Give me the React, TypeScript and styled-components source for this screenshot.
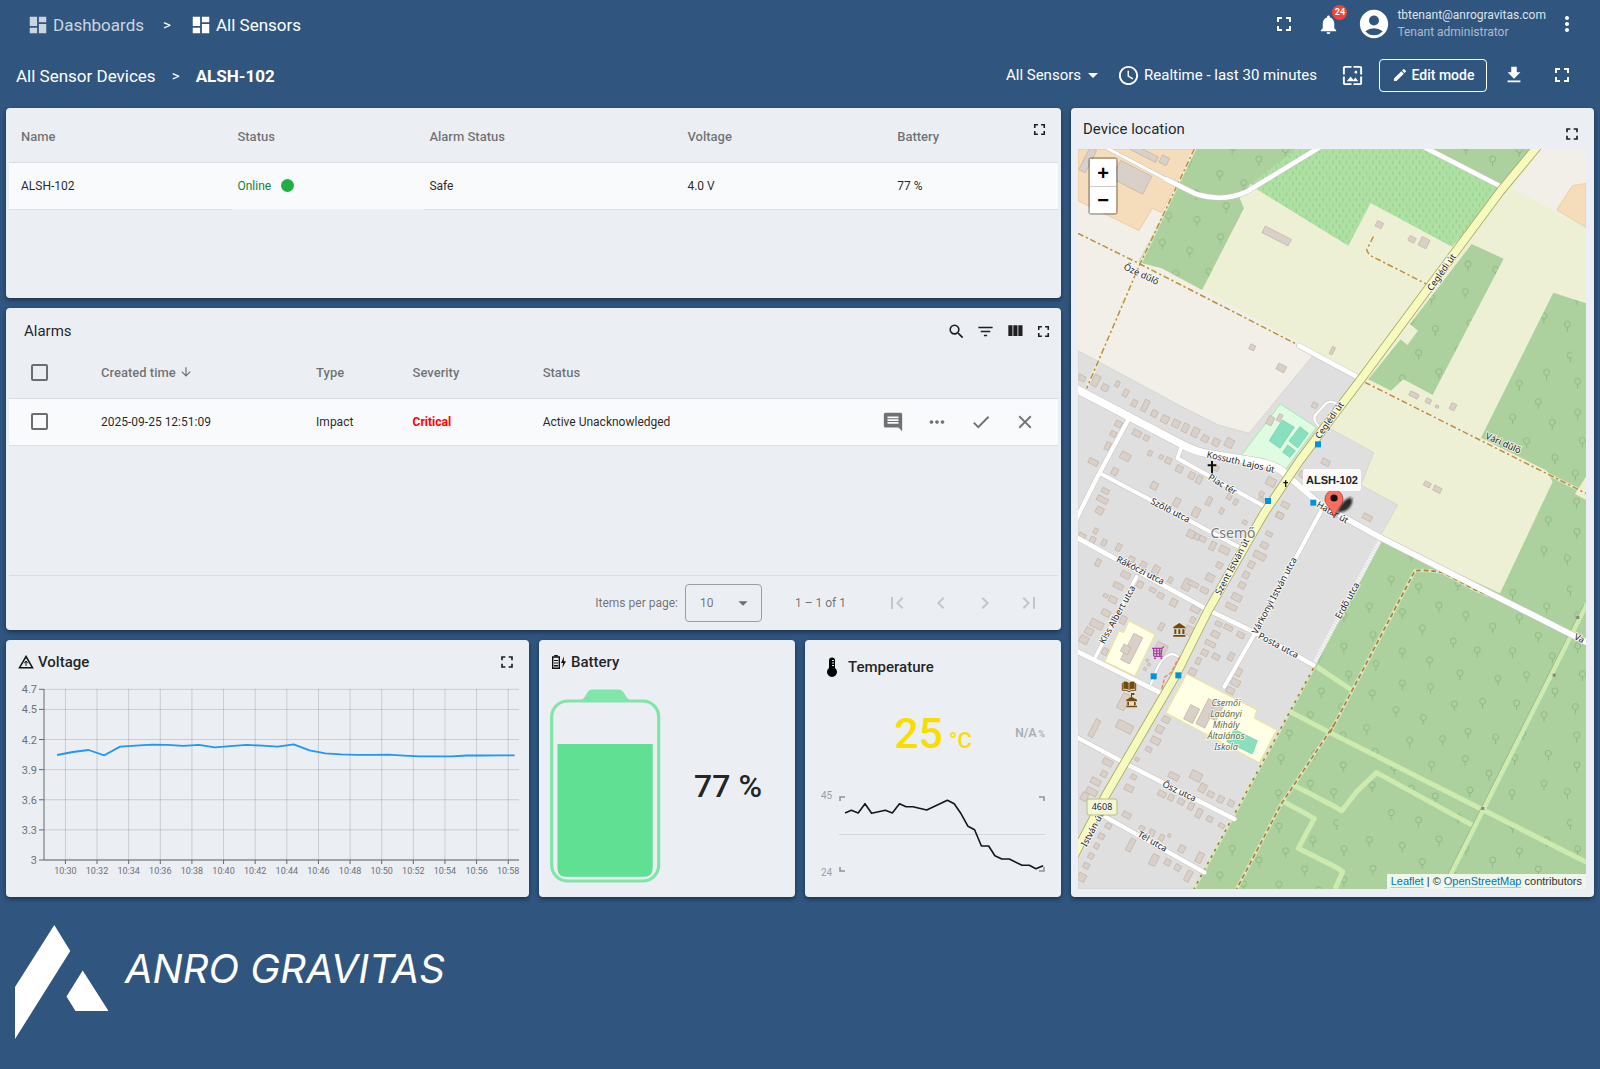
import React from 'react';
import styled, { createGlobalStyle, css } from 'styled-components';
import {
  MdAccountCircle, MdArrowDownward, MdArrowDropDown, MdCheck, MdChevronLeft, MdChevronRight, MdClose,
  MdComment, MdDashboard, MdDownload, MdEdit, MdFilterList, MdFirstPage, MdFullscreen, MdLastPage,
  MdMoreHoriz, MdMoreVert, MdNotifications, MdSchedule, MdSearch, MdWallpaper,
} from 'react-icons/md';

const GlobalStyle = createGlobalStyle`
  *, *::before, *::after { box-sizing: border-box; }
  body {
    margin: 0;
    background: #305680;
    font-family: Roboto, "Liberation Sans", sans-serif;
    color: rgba(0, 0, 0, 0.87);
  }
  button, select { font: inherit; color: inherit; }
`;

const Page = styled.div`
  min-height: 100vh;
  display: flex;
  flex-direction: column;
`;

/* ---------- Toolbars ---------- */

const TopBar = styled.header`
  display: flex;
  align-items: center;
  justify-content: space-between;
  height: 48px;
  padding: 0 12px 0 27px;
  color: #fff;
`;

const Crumbs = styled.nav`
  display: flex;
  align-items: center;
  padding-top: 2px;
  font-size: 17px;
  line-height: 24px;
`;

const CrumbLink = styled.a<{ $dim?: boolean }>`
  display: flex;
  align-items: center;
  gap: 4px;
  color: ${(p) => (p.$dim ? 'rgba(255,255,255,0.75)' : '#fff')};
  text-decoration: none;
`;

const Separator = styled.span<{ $width?: number }>`
  width: ${(p) => p.$width ?? 46}px;
  text-align: center;
  font-size: 15px;
`;

const Row = styled.div<{ $gap?: number; $end?: number }>`
  display: flex;
  align-items: center;
  gap: ${(p) => p.$gap ?? 0}px;
  margin-right: ${(p) => p.$end ?? 0}px;
`;

const IconButton = styled.button<{ $size?: number; $color?: string }>`
  display: inline-flex;
  align-items: center;
  justify-content: center;
  flex: none;
  width: ${(p) => p.$size ?? 44}px;
  height: ${(p) => Math.min(p.$size ?? 44, 40)}px;
  padding: 0;
  border: 0;
  background: none;
  color: ${(p) => p.$color ?? 'inherit'};
  position: relative;
  cursor: pointer;
`;

const LowButton = styled(IconButton)`
  align-self: flex-end;
`;

const Badge = styled.span`
  position: absolute;
  top: 1px;
  right: 3px;
  width: 15px;
  height: 15px;
  border-radius: 50%;
  background: #f44336;
  color: #fff;
  font-size: 9px;
  font-weight: 700;
  line-height: 15px;
  text-align: center;
`;

const User = styled.div`
  display: flex;
  align-items: center;
  gap: 6px;
  padding-left: 7px;
`;

const UserText = styled.div`
  font-size: 12px;
  line-height: 17px;
  color: rgba(255, 255, 255, 0.85);
`;

const UserRole = styled.div`
  color: rgba(255, 255, 255, 0.6);
`;

const SubBar = styled(TopBar)`
  height: 54px;
  padding: 0 12px 0 16px;
`;

const Current = styled.strong`
  font-weight: 700;
`;

const ToolButton = styled.button<{ $gap?: number }>`
  display: inline-flex;
  align-items: center;
  gap: ${(p) => p.$gap ?? 0}px;
  padding: 0;
  border: 0;
  background: none;
  font-size: 15px;
  line-height: 24px;
  cursor: pointer;
`;

const EditButton = styled.button`
  display: inline-flex;
  align-items: center;
  justify-content: center;
  gap: 4px;
  width: 108px;
  height: 33px;
  margin: 0 5px;
  padding: 0;
  border: 1px solid #fff;
  border-radius: 4px;
  background: none;
  font-size: 14px;
  font-weight: 500;
  cursor: pointer;
`;

/* ---------- Dashboard grid ---------- */

const Board = styled.main`
  display: grid;
  grid-template-columns: minmax(0, 1055fr) minmax(0, 523fr);
  gap: 10px;
  padding: 6px;
`;

const LeftColumn = styled.div`
  display: grid;
  grid-template-rows: minmax(190px, auto) minmax(322px, auto) minmax(257px, auto);
  gap: 10px;
`;

const SmallCards = styled.div`
  display: grid;
  grid-template-columns: minmax(0, 523fr) minmax(0, 256fr) minmax(0, 256fr);
  gap: 10px;
`;

const Card = styled.section`
  position: relative;
  display: flex;
  flex-direction: column;
  border-radius: 4px;
  background: #ebeef3;
  box-shadow: 0 2px 5px rgba(0, 0, 0, 0.45);
`;

const TableCard = styled(Card)`
  padding: 0 3px;
`;

const CornerButton = styled(IconButton)`
  position: absolute;
  top: 6px;
  right: 7px;
`;

const TitleRow = styled.div<{ $height?: number; $left?: number; $right?: number }>`
  display: flex;
  align-items: center;
  justify-content: space-between;
  height: ${(p) => p.$height ?? 44}px;
  padding: 0 ${(p) => p.$right ?? 7}px 0 ${(p) => p.$left ?? 12}px;
`;

const Title = styled.h2<{ $medium?: boolean; $gap?: number }>`
  display: flex;
  align-items: center;
  gap: ${(p) => p.$gap ?? 4}px;
  margin: 0;
  font-size: 15px;
  line-height: 20px;
  font-weight: ${(p) => (p.$medium ? 500 : 400)};
`;

/* ---------- Tables ---------- */

const Table = styled.table<{ $compact?: boolean }>`
  width: 100%;
  table-layout: fixed;
  border-collapse: collapse;
  th {
    height: ${(p) => (p.$compact ? 44 : 54)}px;
    padding-top: ${(p) => (p.$compact ? 0 : 4)}px;
    padding-bottom: ${(p) => (p.$compact ? 7 : 0)}px;
  }
`;

const Th = styled.th<{ $left?: number }>`
  padding: 0 0 0 ${(p) => p.$left ?? 5}px;
  border-bottom: 1px solid #d9dce0;
  text-align: left;
  font-size: 13px;
  font-weight: 500;
  color: rgba(0, 0, 0, 0.54);
`;

const cellBorder = css`
  border-bottom: 1px solid #dcdfe3;
`;

const Td = styled.td<{ $left?: number; $plain?: boolean }>`
  height: 47px;
  padding: 0 0 0 ${(p) => p.$left ?? 5}px;
  background: #f8fafc;
  font-size: 12px;
  ${(p) => !p.$plain && cellBorder}
`;

const Online = styled.span`
  display: inline-flex;
  align-items: center;
  gap: 10px;
  color: #198038;
`;

const Dot = styled.span`
  width: 13px;
  height: 13px;
  border-radius: 50%;
  background: #20b041;
`;

const Critical = styled.span`
  color: #f00;
  font-weight: 700;
`;

const Checkbox = styled.input`
  appearance: none;
  display: block;
  width: 17px;
  height: 17px;
  margin: 0;
  border: 2px solid #6b6d70;
  border-radius: 2px;
`;

const Sorted = styled.span`
  display: inline-flex;
  align-items: center;
  gap: 3px;
`;

const Actions = styled.div`
  display: flex;
  justify-content: flex-end;
  padding-right: 11px;
  color: #6f7173;
`;

const Paginator = styled.footer`
  display: flex;
  align-items: center;
  justify-content: flex-end;
  height: 55px;
  margin-top: auto;
  padding-right: 7px;
  border-top: 1px solid #d9dce0;
  font-size: 12px;
  color: rgba(0, 0, 0, 0.54);
`;

const SelectBox = styled.div`
  position: relative;
  margin: 0 33px 0 7px;
  svg { position: absolute; right: 8px; top: 8px; pointer-events: none; }
`;

const Select = styled.select`
  appearance: none;
  display: block;
  width: 77px;
  height: 38px;
  padding: 0 14px;
  border: 1px solid #9c9ea2;
  border-radius: 4px;
  background: none;
`;

const Range = styled.span`
  margin-right: 29px;
`;

/* ---------- Small widgets ---------- */

const Drawing = styled.svg`
  display: block;
  width: 100%;
`;

const BatteryBody = styled.div`
  display: flex;
  align-items: center;
  padding: 4px 0 0 11px;
`;

const BatteryValue = styled.div`
  flex: 1;
  text-align: center;
  font-size: 32px;
  font-weight: 500;
`;

const TempRow = styled.div`
  display: grid;
  grid-template-columns: 1fr auto 1fr;
  align-items: center;
  height: 78px;
  margin-bottom: 13px;
  padding: 0 16px;
`;

const TempValue = styled.div`
  grid-column: 2;
  display: flex;
  align-items: baseline;
  gap: 6px;
  font-size: 43px;
  font-weight: 500;
  color: #f8de00;
`;

const TempUnit = styled.span`
  font-size: 22px;
`;

const Secondary = styled.div`
  text-align: right;
  font-size: 12px;
  font-weight: 500;
  color: #a3abaf;
`;

const SmallUnit = styled.span`
  margin-left: 2px;
  font-size: 9px;
`;

/* ---------- Map ---------- */

const MapFrame = styled.div`
  position: relative;
  margin: 0 8px 8px 7px;
  flex: 1;
  min-height: 740px;
  overflow: hidden;
  background: #add19e;
`;

const ZoomBox = styled.div`
  position: absolute;
  top: 8px;
  left: 10px;
  width: 30px;
  border: 2px solid rgba(0, 0, 0, 0.25);
  border-radius: 4px;
  background-clip: padding-box;
`;

const ZoomButton = styled.button`
  display: block;
  width: 26px;
  height: 27px;
  padding: 0;
  border: 0;
  background: #fff;
  color: #000;
  font-family: "Liberation Sans", Arial, sans-serif;
  font-size: 20px;
  font-weight: 700;
  line-height: 26px;
  & + & { border-top: 1px solid #ccc; }
`;

const MarkerLabel = styled.div`
  position: absolute;
  top: 320px;
  left: 225px;
  padding: 0 3px;
  border-radius: 3px;
  background: rgba(255, 255, 255, 0.88);
  color: #222;
  font-family: "Liberation Sans", Arial, sans-serif;
  font-size: 11px;
  font-weight: 700;
  line-height: 22px;
`;

const Attribution = styled.div`
  position: absolute;
  right: 0;
  bottom: 0;
  padding: 0 4px;
  background: rgba(255, 255, 255, 0.8);
  color: #333;
  font-family: "Liberation Sans", Arial, sans-serif;
  font-size: 11px;
  line-height: 15px;
  a { color: #0078a8; text-decoration-color: rgba(0, 120, 168, 0.3); text-underline-offset: 2px; }
`;

const StreetText = styled.text`
  font-family: "Noto Sans", sans-serif;
  font-size: 9px;
  fill: #222;
  stroke: rgba(255, 255, 255, 0.7);
  stroke-width: 2px;
  paint-order: stroke;
  text-anchor: middle;
`;

const PlaceText = styled(StreetText)`
  font-size: 14px;
  fill: #777;
`;

const SchoolText = styled(StreetText)`
  font-style: italic;
  fill: #69692f;
`;

const AxisText = styled.text<{ $small?: boolean }>`
  font-size: ${(p) => (p.$small ? 9 : 11)}px;
  fill: #6e7079;
`;

const SparkText = styled.text`
  font-size: 10px;
  fill: #9aa1a6;
`;

/* ---------- Logo ---------- */

const Brand = styled.footer`
  display: flex;
  align-items: flex-start;
  gap: 16px;
  padding: 22px 15px;
`;

const BrandName = styled.div`
  padding-top: 18px;
  color: #fff;
  font-family: Inter, Lato, sans-serif;
  font-size: 40px;
  font-style: italic;
  line-height: 52px;
`;

/* ---------- Voltage chart ---------- */

const voltageTicks = [4.7, 4.5, 4.2, 3.9, 3.6, 3.3, 3];
const timeTicks = Array.from({ length: 15 }, (_, i) => `10:${30 + i * 2}`);
const voltage = [
  4.046, 4.076, 4.096, 4.043, 4.129, 4.139, 4.149, 4.146, 4.136, 4.146, 4.123, 4.133, 4.146, 4.139, 4.129,
  4.152, 4.093, 4.063, 4.053, 4.048, 4.048, 4.05, 4.04, 4.033, 4.033, 4.033, 4.041, 4.041, 4.043, 4.043,
];
const vy = (v: number) => 176 - (v - 3) * 100.4;
const tx = (i: number) => 59.4 + i * 31.63;

function VoltageChart() {
  return (
    <Drawing viewBox="0 0 523 205" role="img" aria-label="Voltage over time">
      {voltageTicks.map((v) => (
        <g key={v}>
          <path d={`M38 ${vy(v)}H513`} stroke="#000" strokeOpacity=".14" />
          <path d={`M33 ${vy(v)}H38`} stroke="#666a70" />
          <AxisText x="31" y={vy(v) + 4} textAnchor="end">{v}</AxisText>
        </g>
      ))}
      {timeTicks.map((t, i) => (
        <g key={t}>
          <path d={`M${tx(i)} 5V176`} stroke="#000" strokeOpacity=".14" />
          <path d={`M${tx(i)} 176v4`} stroke="#666a70" />
          <AxisText $small x={tx(i)} y="190" textAnchor="middle">{t}</AxisText>
        </g>
      ))}
      <path d="M38 5V176H513" fill="none" stroke="#666a70" />
      <polyline
        points={voltage.map((v, i) => `${(51 + i * 15.78).toFixed(1)},${vy(v).toFixed(1)}`).join(' ')}
        fill="none" stroke="#2196f3" strokeWidth="1.8" strokeLinejoin="round"
      />
    </Drawing>
  );
}

function Sparkline() {
  return (
    <Drawing viewBox="0 0 256 100" role="img" aria-label="Temperature trend">
      <SparkText x="16" y="14">45</SparkText>
      <SparkText x="16" y="91">24</SparkText>
      <path d="M34 49.5H240" stroke="#d2d6da" />
      <path d="M35 16v-4h5M234 12h5v4M35 82v4h5M234 86h5v-4" fill="none" stroke="#8f9499" strokeWidth="1.6" />
      <polyline
        points="40.1,28 46.3,25.3 53.2,28 60,18.7 66.6,28.3 80.4,25.3 87.3,28 94.5,18.7 101,21.7 107.9,21.7 121.7,25 142.4,15.3 149.2,18.7 155.4,27.7 163,41.3 169.6,44.7 176.4,61 183.7,61 189.9,70.7 196.8,74 204.3,74 217,80.3 224.3,80.3 230.9,83.7 238.1,80.7"
        fill="none" stroke="#161616" strokeWidth="1.6" strokeLinejoin="round"
      />
    </Drawing>
  );
}

function BatteryShape() {
  return (
    <svg width="111" height="196" viewBox="0 0 111 196" aria-hidden="true">
      <path d="M29 13C37 11 36 1.500 42 1.500H69C75 1.500 74 11 82 13Z" fill="#80e5a8" />
      <rect x="1.700" y="13" width="107" height="180" rx="16" fill="none" stroke="#80e5a8" strokeWidth="3.200" />
      <path d="M7.500 56H102.700V180Q102.700 188.700 94 188.700H16Q7.500 188.700 7.500 180Z" fill="#5fe093" />
    </svg>
  );
}

/* ---------- Map data: terrain is drawn at three units per pixel ---------- */

const forest = [
  '355,0 655,0 520,103 485,148 498,178 372,423 251,358 181,340',
  '1056,0 1355,0 1275,110',
  '1181,285 1277,329 1064,738 976,691 939,725 871,691 968,571 988,588 1020,545 996,525',
  '1426,431 1524,463 1524,2220 348,2220 706,1553 911,1168 1266,1333 1424,998 1406,965 1209,866',
];

const trees: [number, number][] = [
  [184, 207], [266, 229], [384, 220], [548, 247], [721, 237], [118, 288], [217, 305], [327, 286], [408, 314],
  [650, 288], [568, 321], [42, 315], [488, 349], [277, 354], [129, 374], [625, 376], [370, 393], [42, 408],
  [442, 420], [217, 423], [548, 422], [667, 438], [138, 461], [299, 450], [390, 489], [56, 492], [504, 505],
  [590, 494], [217, 519], [302, 530], [127, 549], [675, 543], [458, 574], [373, 582], [560, 579], [198, 599],
  [35, 590], [642, 614], [280, 623], [414, 664], [110, 653], [579, 669], [39, 675], [497, 681], [338, 686],
  [239, 691], [655, 730], [135, 724], [554, 743], [406, 746], [305, 763], [193, 772], [40, 765], [477, 790],
  [127, 825], [642, 820], [420, 840], [244, 834], [546, 848], [316, 858], [712, 845],
];

type Block = [number, number, number, number];

const north: Block[] = [
  [50, 714, 22, 16], [92, 722, 20, 34], [120, 743, 20, 20], [157, 732, 12, 18], [182, 759, 14, 22], [208, 790, 16, 20],
  [241, 797, 16, 36], [268, 821, 18, 20], [300, 838, 22, 22], [333, 851, 22, 22], [361, 864, 18, 26], [391, 877, 20, 28],
  [420, 896, 20, 20], [453, 907, 20, 22], [493, 909, 24, 26], [160, 852, 20, 18], [145, 882, 18, 16], [128, 918, 14, 24],
  [216, 880, 26, 18], [244, 894, 16, 16], [181, 949, 30, 22], [149, 995, 18, 22], [255, 940, 12, 16], [289, 951, 12, 12],
  [310, 962, 18, 18], [343, 987, 20, 20], [380, 1007, 18, 20], [402, 1019, 16, 24], [268, 1037, 20, 22], [85, 966, 30, 16],
  [121, 1053, 22, 14], [112, 1079, 34, 16], [104, 1112, 22, 20], [335, 1087, 18, 26], [393, 1117, 20, 28],
  [432, 1084, 14, 26], [470, 1113, 12, 18], [493, 1070, 14, 18], [512, 1086, 12, 18], [618, 1026, 28, 24],
  [590, 1062, 14, 14], [588, 1080, 18, 14], [661, 1095, 24, 16], [644, 1126, 22, 18], [782, 967, 24, 18],
  [715, 1005, 24, 18], [452, 984, 18, 16], [562, 622, 16, 16], [649, 684, 26, 20], [616, 842, 18, 26],
  [644, 833, 12, 22], [749, 796, 16, 16], [635, 288, 88, 22], [802, 632, 10, 24], [200, 112, 105, 60],
  [68, 60, 22, 75], [238, 40, 85, 18], [298, 61, 24, 24],
];

const east: Block[] = [
  [148, 254, 20, 18], [246, 298, 20, 16], [282, 308, 26, 28], [252, 765, 28, 14], [295, 783, 16, 14], [321, 800, 10, 8],
  [369, 800, 16, 20], [292, 1033, 20, 14], [322, 1048, 24, 16], [112, 1132, 28, 16], [60, 1080, 12, 20],
];

const south: Block[] = [
  [50, 80, 22, 20], [83, 90, 16, 18], [92, 63, 12, 16], [117, 98, 14, 20], [161, 112, 14, 22], [99, 158, 14, 22],
  [182, 195, 28, 18], [200, 148, 18, 16], [235, 165, 18, 20], [273, 180, 20, 26], [316, 210, 12, 18], [225, 224, 18, 20],
  [263, 240, 20, 12], [287, 257, 20, 16], [326, 278, 20, 22], [160, 228, 30, 16], [122, 257, 14, 10], [144, 269, 24, 18],
  [366, 224, 24, 34], [385, 222, 32, 14], [418, 241, 24, 16], [435, 203, 24, 22], [463, 166, 18, 18], [443, 108, 16, 26],
  [413, 87, 20, 16], [378, 72, 22, 22], [396, 80, 14, 18], [478, 120, 30, 20], [539, 37, 14, 12], [645, 17, 20, 16],
  [612, 72, 20, 12], [598, 106, 22, 18], [584, 137, 38, 20], [559, 164, 18, 20], [543, 195, 18, 20], [531, 226, 20, 18],
  [515, 262, 30, 20], [499, 290, 34, 16], [391, 298, 28, 18], [383, 330, 14, 18], [461, 342, 20, 14], [490, 353, 26, 14],
  [527, 375, 22, 16], [451, 373, 24, 18], [436, 401, 32, 14], [419, 428, 20, 18], [453, 440, 22, 16], [498, 440, 16, 24],
  [400, 453, 14, 20], [383, 485, 22, 20], [519, 486, 20, 24], [512, 518, 26, 20], [496, 542, 24, 18], [123, 309, 26, 18],
  [95, 343, 40, 22], [72, 364, 24, 20], [57, 389, 26, 22], [174, 330, 18, 24], [289, 350, 14, 22], [120, 425, 16, 20],
  [288, 415, 34, 30], [372, 362, 24, 26], [247, 451, 8, 8], [252, 464, 8, 8], [240, 477, 8, 8], [176, 575, 24, 50],
  [179, 650, 50, 26], [88, 655, 16, 56], [303, 629, 22, 18], [284, 658, 22, 22], [272, 692, 28, 20], [251, 718, 18, 14],
  [216, 748, 12, 10], [206, 801, 16, 14], [192, 835, 26, 18], [128, 757, 30, 18], [117, 792, 18, 18], [92, 815, 30, 18],
  [80, 845, 34, 18], [58, 860, 20, 24], [326, 799, 32, 18], [393, 798, 34, 26], [413, 834, 20, 26], [437, 853, 20, 16],
  [467, 868, 18, 20], [498, 880, 18, 18], [291, 852, 24, 16], [318, 863, 16, 18], [348, 875, 20, 16], [378, 889, 16, 22],
  [402, 910, 16, 28], [434, 927, 18, 16], [470, 947, 18, 12], [185, 915, 26, 16], [130, 948, 18, 16], [231, 954, 16, 12],
  [261, 968, 16, 18], [290, 983, 14, 18], [313, 976, 8, 10], [350, 1017, 18, 22], [404, 1043, 18, 32], [370, 1098, 16, 34],
  [338, 1073, 18, 18], [308, 1057, 18, 18], [267, 1050, 20, 34], [197, 1005, 16, 40], [109, 979, 18, 16], [95, 1008, 14, 16],
  [78, 1038, 16, 16], [64, 1067, 18, 16], [50, 1102, 24, 22], [200, 416, 30, 88], [182, 418, 24, 24], [380, 612, 30, 48],
  [425, 610, 30, 84], [455, 600, 26, 60],
];

const homes: Block[] = [
  ...north.map(([x, y, w, h]) => [x - 39, y - 27, w, h] as Block),
  ...east.map(([x, y, w, h]) => [x + 756, y - 27, w, h] as Block),
  ...south.map(([x, y, w, h]) => [x - 39, y + 1083, w, h] as Block),
];

const streets: { d: string; w: number }[] = [
  { d: 'M86-3 265 91', w: 9 },
  { d: 'M265 91 356 136Q436 160 506 128L725-5', w: 14 },
  { d: 'M1040-5 1271 114', w: 14 },
  { d: 'M663 590 836 683', w: 14 },
  { d: 'M153 808 60 980-5 1110', w: 13 },
  { d: 'M311 893 298 928 561 1073', w: 12 },
  { d: 'M66 973 331 1113 481 1193', w: 12 },
  { d: 'M-5 1165 391 1383 536 1453 706 1548', w: 14 },
  { d: 'M176 1283 53 1523', w: 11 },
  { d: 'M-5 1506 246 1631', w: 14 },
  { d: 'M219 1605 231 1573Q255 1515 286 1515L301 1523', w: 7 },
  { d: 'M760 1040 731 1083 531 1453 439 1613', w: 12 },
  { d: 'M-5 1764 151 1848 469 2010', w: 13 },
  { d: 'M81 2003 379 2170', w: 13 },
  { d: 'M722 832Q700 808 715 795L745 762Q765 750 785 775', w: 7 },
  { d: 'M626 978 720 1060 816 1115 911 1168 1526 1480', w: 17 },
  { d: 'M-5 720 306 883Q350 908 396 915L540 938Q600 950 626 978', w: 23 },
];

const rides = [
  'M1526 1365 1090 2230', 'M636 1688 756 1751 1216 1983 1526 2140', 'M716 1553 821 1623',
  'M646 1908 771 1973 791 1986 836 1928 896 1871 1191 2033',
  'M611 1955 709 2008 661 2098 771 2153 794 2168 771 2220',
];

const footways = [
  'M349 0 186 345 26 718', 'M0 253 186 345 651 583', 'M886 263 866 303 874 318 1051 408', 'M861 700 1524 1033',
];

const tracks = ['M1241 1343 1186 1320 1096 1271Q1050 1262 1011 1265L756 1751M771 1723 611 1963 476 2220'];

const mainRoad = 'M1376-5 1266 128 851 688 756 813 665 935 558 1093 391 1383 291 1583 81 1943-12 2120';

const labels: [string, number, number, number][] = [
  ['Őze dűlő', 62, 128, 25], ['Ceglédi út', 366, 125, -55], ['Ceglédi út', 254, 273, -55], ['Vári dűlő', 424, 297, 24],
  ['Kossuth Lajos út', 162, 316, 13], ['Piac tér', 143, 338, 31], ['Szőlő utca', 91, 364, 27],
  ['Rákóczi utca', 61, 424, 27], ['Kiss Albert utca', 42, 467, -61], ['Szent István út', 157, 419, -62],
  ['Várkonyi István utca', 199, 448, -62], ['Posta utca', 199, 499, 28], ['Erdő utca', 272, 453, -61],
  ['Ősz utca', 100, 645, 25], ['Tél utca', 73, 695, 30], ['István út', 17, 682, -62], ['Határ út', 253, 366, 30],
  ['Va', 500, 492, 27],
];

const stops: [number, number][] = [[720, 886], [570, 1056], [706, 1061], [227, 1582], [301, 1579]];

function MapDrawing() {
  return (
    <Drawing viewBox="0 0 508 740" role="img" aria-label="Map of Csemő">
      <defs>
        <pattern id="trees" x="781" y="1273" width="701" height="701" patternUnits="userSpaceOnUse">
          <rect width="701" height="701" fill="#add19e" />
          {trees.map(([x, y]) => (
            <path key={`${x}-${y}`} d={`M${x - 34} ${y - 190}a9 9 0 1 1 18 0a9 9 0 1 1-18 0M${x - 25} ${y - 181}v13`} fill="none" stroke="#8bb57d" strokeWidth="2.800" />
          ))}
        </pattern>
        <pattern id="orchard" width="20" height="32" patternUnits="userSpaceOnUse">
          <rect width="20" height="32" fill="#aedfa3" />
          <path d="M5 3v11M15 19v11" stroke="#93c98b" strokeWidth="3" />
        </pattern>
        <filter id="soft" x="-30%" y="-30%" width="160%" height="160%"><feGaussianBlur stdDeviation="1" /></filter>
      </defs>
      <g transform="scale(0.33333)">
        <rect width="1524" height="2220" fill="#eef0d5" />
        <polygon points="0,0 350,0 180,340 250,358 372,423 700,600 710,618 513,853 421,828 321,778 0,605" fill="#f2efe9" />
        <polygon points="0,0 349,0 251,191 223,178 183,245 0,155" fill="#f5dcba" stroke="#e6c493" strokeWidth="2" />
        <polygon points="1391,0 1524,0 1524,235 1301,118" fill="#f2efe9" />
        <polygon points="1524,103 1483,110 1436,183 1524,235" fill="#f5dcba" stroke="#e6c493" strokeWidth="2" />
        <polygon points="655,0 1050,0 1272,118 1122,293 878,162 811,290 531,118 515,100" fill="url(#orchard)" />
        {forest.map((p) => <polygon key={p} points={p} fill="url(#trees)" />)}
        <polygon points="1524,983 1491,1035 1524,1053" fill="#eef0d5" />
        <path d="M0 605 321 778 421 828 513 853 706 618 841 683 756 838 887 911 849 1008 959 1068 911 1153 706 1553 348 2220H0Z" fill="#e0dfdf" stroke="#cfcdca" strokeWidth="2" />
        <polygon points="607,765 715,835 620,965 560,930 489,920" fill="#dffce2" stroke="#a5e8b2" strokeWidth="3" />
        <g fill="#88e0be" stroke="#6fcaa7" strokeWidth="2">
          <polygon points="613,813 649,835 606,898 574,875" />
          <polygon points="666,833 691,853 659,897 633,876" />
          <polygon points="629,888 652,905 636,925 614,910" />
        </g>
        <g fill="#ffffe5" stroke="#ece58f" strokeWidth="3">
          <polygon points="153,1416 231,1457 171,1581 81,1538 123,1446 137,1451" />
          <polygon points="326,1575 536,1683 529,1708 596,1743 544,1841 264,1691" />
        </g>
        <g fill="#d9d0c9" stroke="#c2b2a5" strokeWidth="2">
          {homes.map(([x, y, w, h], i) => (
            <rect key={i} x={x - w / 2} y={y - h / 2} width={w} height={h} transform={`rotate(27 ${x} ${y})`} />
          ))}
        </g>
        <polygon points="469,1741 538,1775 523,1815 446,1778" fill="#88e0be" stroke="#6fcaa7" strokeWidth="2" />
        <g fill="none" stroke="#cdebb0" strokeWidth="15" strokeLinejoin="round">
          {rides.map((d) => <path key={d} d={d} />)}
        </g>
        <path d="M1518 1365 1082 2230" stroke="#9db98f" strokeWidth="3" />
        <g fill="none" strokeLinejoin="round">
          <path d="M706 1558 348 2220" stroke="#d8e5cb" strokeWidth="9" />
          <path d="M706 1558 348 2220" stroke="#a97c2e" strokeWidth="5" strokeDasharray="8 14" />
          {footways.map((d) => <path key={d} d={d} stroke="#f6efdf" strokeWidth="9" strokeOpacity=".7" />)}
          {footways.map((d) => <path key={d} d={d} stroke="#b8903f" strokeWidth="4.500" strokeDasharray="18 8 7 8" />)}
          {tracks.map((d) => <path key={d} d={d} stroke="#d5e6c8" strokeWidth="10" />)}
          {tracks.map((d) => <path key={d} d={d} stroke="#b0812b" strokeWidth="5" strokeDasharray="14 9" />)}
          <path d="M908 1170 706 1548" stroke="#f5f4f4" strokeWidth="12" />
          <path d="M908 1170 706 1548" stroke="#d8d6d6" strokeWidth="12" strokeDasharray="2 6" />
        </g>
        <g fill="none" strokeLinecap="round" strokeLinejoin="round">
          {streets.map((s) => <path key={s.d} d={s.d} stroke="#c6c4c2" strokeWidth={s.w + 3} />)}
          {streets.map((s) => <path key={s.d} d={s.d} stroke="#fff" strokeWidth={s.w} />)}
          <path d={mainRoad} stroke="#a9a95c" strokeWidth="28" />
          <path d={mainRoad} stroke="#f7fabf" strokeWidth="23" />
          <path d="M252 1618 260 1585 280 1570 295 1540 305 1525" stroke="#f77c70" strokeWidth="4" strokeDasharray="9 8" />
        </g>
        <g fill="#0092da">
          {stops.map(([x, y]) => <rect key={x} x={x - 9} y={y - 9} width="18" height="18" />)}
        </g>
        <g fill="#8c7f86">
          <rect x="1495" y="1401" width="9" height="9" /><rect x="1424" y="1574" width="9" height="9" /><rect x="1210" y="1974" width="9" height="9" />
        </g>
        <path d="M402 936v38M389 949h26" stroke="#111" strokeWidth="6" />
        <path d="M623 994v20M616 1001h14" stroke="#111" strokeWidth="4" />
        <g fill="#734a08">
          <path d="M286 1434 304 1422 322 1434V1438H286ZM289 1441h6v14h-6ZM301 1441h6v14h-6ZM313 1441h6v14h-6ZM286 1458h36v5h-36Z" />
          <path d="M136 1598Q145 1596 152 1601V1623Q145 1618 136 1620ZM170 1598Q161 1596 154 1601V1623Q161 1618 170 1620Z" />
          <path d="M133 1602V1624Q146 1622 153 1628Q160 1622 173 1624V1602" fill="none" stroke="#734a08" strokeWidth="3" />
          <path d="M159 1632h10v6h-7v6l15 8v5h-32v-5l14-8ZM148 1659h5v10h-5ZM168 1659h5v10h-5ZM145 1670h32v5h-32Z" />
        </g>
        <path d="M222 1498h30l6-6M225 1506h26M227 1514h24M228 1522h26M227 1498v24M236 1498v24M245 1498v24M252 1498l-3 24" stroke="#ac39ac" strokeWidth="3.500" fill="none" />
        <circle cx="231" cy="1528" r="3" fill="#ac39ac" /><circle cx="250" cy="1528" r="3" fill="#ac39ac" />
      </g>
      {labels.map(([text, x, y, angle]) => (
        <StreetText key={`${text}${x}`} transform={`translate(${x} ${y}) rotate(${angle})`}>{text}</StreetText>
      ))}
      <PlaceText x="155" y="389">Csemő</PlaceText>
      {['Csemői', 'Ladányi', 'Mihály', 'Általános', 'Iskola'].map((t, i) => (
        <SchoolText key={t} x="148" y={557 + i * 11}>{t}</SchoolText>
      ))}
      <rect x="9" y="650" width="30" height="16" rx="2" fill="#f4f6d0" stroke="#bcbc84" />
      <StreetText x="24" y="661">4608</StreetText>
      <path d="M256 369 262 357Q268 348 273 349Q276 352 272 358Q268 363 262 363Z" fill="#111" opacity=".85" filter="url(#soft)" />
      <path d="M256 369C254 359 247 357 247 350A9 9 0 0 1 265 350C265 357 258 359 256 369Z" fill="#fd6c60" stroke="#7d2a24" strokeWidth=".6" />
      <circle cx="256" cy="349" r="3.600" fill="#111" />
    </Drawing>
  );
}

/* ---------- Page ---------- */

export default function App() {
  return (
    <Page>
      <GlobalStyle />
      <TopBar>
        <Crumbs aria-label="Breadcrumb">
          <CrumbLink $dim href="#dashboards"><MdDashboard size={22} />Dashboards</CrumbLink>
          <Separator>&gt;</Separator>
          <CrumbLink href="#all-sensors"><MdDashboard size={22} />All Sensors</CrumbLink>
        </Crumbs>
        <Row>
          <IconButton aria-label="Fullscreen"><MdFullscreen size={24} /></IconButton>
          <IconButton aria-label="Notifications"><MdNotifications size={23} /><Badge>24</Badge></IconButton>
          <User>
            <MdAccountCircle size={34} />
            <UserText>
              tbtenant@anrogravitas.com
              <UserRole>Tenant administrator</UserRole>
            </UserText>
          </User>
          <IconButton $size={42} aria-label="More"><MdMoreVert size={24} /></IconButton>
        </Row>
      </TopBar>

      <SubBar as="div">
        <Crumbs aria-label="Dashboard state">
          <CrumbLink href="#devices">All Sensor Devices</CrumbLink>
          <Separator $width={40}>&gt;</Separator>
          <Current>ALSH-102</Current>
        </Crumbs>
        <Row>
          <Row $gap={12} $end={13}>
            <ToolButton>All Sensors<MdArrowDropDown size={24} /></ToolButton>
            <ToolButton $gap={4}><MdSchedule size={23} />Realtime - last 30 minutes</ToolButton>
          </Row>
          <IconButton aria-label="Background image"><MdWallpaper size={23} /></IconButton>
          <EditButton><MdEdit size={16} />Edit mode</EditButton>
          <IconButton aria-label="Export"><MdDownload size={22} /></IconButton>
          <IconButton $size={52} aria-label="Expand dashboard"><MdFullscreen size={24} /></IconButton>
        </Row>
      </SubBar>

      <Board>
        <LeftColumn>
          <TableCard>
            <Table>
              <colgroup>
                <col width="21.3%" /><col width="18.3%" /><col width="24.600%" /><col width="20%" /><col />
              </colgroup>
              <thead>
                <tr><Th $left={12}>Name</Th><Th>Status</Th><Th>Alarm Status</Th><Th>Voltage</Th><Th>Battery</Th></tr>
              </thead>
              <tbody>
                <tr>
                  <Td $left={12}>ALSH-102</Td>
                  <Td $plain><Online>Online<Dot /></Online></Td>
                  <Td>Safe</Td><Td>4.0 V</Td><Td>77 %</Td>
                </tr>
              </tbody>
            </Table>
            <CornerButton $size={30} aria-label="Expand devices"><MdFullscreen size={19} /></CornerButton>
          </TableCard>

          <TableCard>
            <TitleRow $height={46} $left={15} $right={0}>
              <Title>Alarms</Title>
              <Row>
                <IconButton $size={29} aria-label="Search"><MdSearch size={19} /></IconButton>
                <IconButton $size={29} aria-label="Filter"><MdFilterList size={19} /></IconButton>
                <IconButton $size={29} aria-label="Columns">
                  <svg width="20" height="20" viewBox="0 0 24 24" fill="currentColor"><path d="M10 18h5V5h-5v13zm-6 0h5V5H4v13zM16 5v13h5V5h-5z" /></svg>
                </IconButton>
                <IconButton $size={29} aria-label="Expand alarms"><MdFullscreen size={19} /></IconButton>
              </Row>
            </TitleRow>
            <Table $compact>
              <colgroup>
                <col width="8.3%" /><col width="20.500%" /><col width="9.200%" /><col width="12.4%" /><col /><col width="190" />
              </colgroup>
              <thead>
                <tr>
                  <Th $left={22}><Checkbox type="checkbox" aria-label="Select all alarms" /></Th>
                  <Th><Sorted>Created time <MdArrowDownward size={14} /></Sorted></Th>
                  <Th>Type</Th><Th>Severity</Th><Th>Status</Th><Th aria-label="Actions" />
                </tr>
              </thead>
              <tbody>
                <tr>
                  <Td $left={22}><Checkbox type="checkbox" aria-label="Select alarm" /></Td>
                  <Td>2025-09-25 12:51:09</Td><Td>Impact</Td>
                  <Td><Critical>Critical</Critical></Td>
                  <Td>Active Unacknowledged</Td>
                  <Td $left={0}>
                    <Actions>
                      <IconButton aria-label="Comments"><MdComment size={22} /></IconButton>
                      <IconButton aria-label="Details"><MdMoreHoriz size={22} /></IconButton>
                      <IconButton aria-label="Acknowledge"><MdCheck size={22} /></IconButton>
                      <IconButton aria-label="Clear"><MdClose size={22} /></IconButton>
                    </Actions>
                  </Td>
                </tr>
              </tbody>
            </Table>
            <Paginator>
              <label htmlFor="page-size">Items per page:</label>
              <SelectBox>
                <Select id="page-size" defaultValue="10"><option>10</option><option>20</option><option>30</option></Select>
                <MdArrowDropDown size={22} />
              </SelectBox>
              <Range>1 – 1 of 1</Range>
              <IconButton $color="#c3c6ca" aria-label="First page"><MdFirstPage size={24} /></IconButton>
              <IconButton $color="#c3c6ca" aria-label="Previous page"><MdChevronLeft size={24} /></IconButton>
              <IconButton $color="#c3c6ca" aria-label="Next page"><MdChevronRight size={24} /></IconButton>
              <IconButton $color="#c3c6ca" aria-label="Last page"><MdLastPage size={24} /></IconButton>
            </Paginator>
          </TableCard>

          <SmallCards>
            <Card>
              <TitleRow>
                <Title $medium>
                  <svg width="16" height="16" viewBox="0 0 16 16" fill="none" stroke="#111" strokeWidth="1.500" aria-hidden="true">
                    <path d="M8 2.500 14.500 13.700H1.500Z" /><path d="M8 12V7M6.200 9.300 8 7l1.800 2.300" strokeWidth="1" />
                  </svg>
                  Voltage
                </Title>
                <IconButton $size={30} aria-label="Expand voltage"><MdFullscreen size={20} /></IconButton>
              </TitleRow>
              <VoltageChart />
            </Card>

            <Card>
              <TitleRow>
                <Title $medium>
                  <svg width="16" height="16" viewBox="0 0 16 16" aria-hidden="true">
                    <path d="M1.700 3H8.300V14.300H1.700Z" fill="none" stroke="#111" strokeWidth="1.400" />
                    <path d="M3.200 1h3.600v1.500H3.200ZM3 6h4v1H3ZM3 8.500h4v1H3ZM3 11h4v1.400H3ZM13 2.500 10 9h2l-.7 5L15 7.300h-2.200Z" fill="#111" />
                  </svg>
                  Battery
                </Title>
              </TitleRow>
              <BatteryBody>
                <BatteryShape />
                <BatteryValue>77 %</BatteryValue>
              </BatteryBody>
            </Card>

            <Card>
              <TitleRow $height={54} $left={21}>
                <Title $medium $gap={10}>
                  <svg width="12" height="20" viewBox="0 0 12 20" aria-hidden="true">
                    <path d="M3 3.500a3 3 0 0 1 6 0V11a5 5 0 1 1-6 0Z" fill="#000" />
                    <path d="M6 3.500h2M6 6h2M6 8.500h2" stroke="#ebeef3" />
                  </svg>
                  Temperature
                </Title>
              </TitleRow>
              <TempRow>
                <TempValue>25<TempUnit>°C</TempUnit></TempValue>
                <Secondary>N/A<SmallUnit>%</SmallUnit></Secondary>
              </TempRow>
              <Sparkline />
            </Card>
          </SmallCards>
        </LeftColumn>

        <Card>
          <TitleRow $height={41}>
            <Title>Device location</Title>
            <LowButton $size={30} aria-label="Expand map"><MdFullscreen size={20} /></LowButton>
          </TitleRow>
          <MapFrame>
            <MapDrawing />
            <ZoomBox>
              <ZoomButton aria-label="Zoom in">+</ZoomButton>
              <ZoomButton aria-label="Zoom out">−</ZoomButton>
            </ZoomBox>
            <MarkerLabel>ALSH-102</MarkerLabel>
            <Attribution>
              <a href="#leaflet">Leaflet</a> | © <a href="#osm">OpenStreetMap</a> contributors
            </Attribution>
          </MapFrame>
        </Card>
      </Board>

      <Brand>
        <svg width="94" height="116" viewBox="0 0 94 116" fill="#fff" aria-hidden="true">
          <path d="M39.300 0 55.300 26 0 114V62ZM67.700 45.500 93.500 86H60.500L51.500 71.500Z" />
        </svg>
        <BrandName>ANRO GRAVITAS</BrandName>
      </Brand>
    </Page>
  );
}
